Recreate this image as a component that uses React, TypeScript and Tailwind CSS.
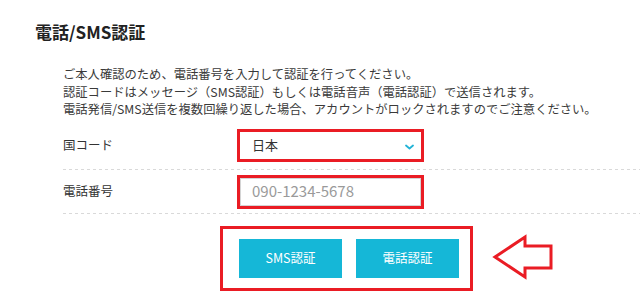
import React from 'react';

const dotted =
  'h-px w-full bg-[repeating-linear-gradient(to_right,#d9d9d9_0px,#d9d9d9_3px,transparent_3px,transparent_6px)]';

function Row({ label, children, pt, pb }: { label: string; children: React.ReactNode; pt: string; pb: string }) {
  return (
    <div>
      <div className={`flex items-center ${pt} ${pb}`}>
        <div className="w-[174px] shrink-0 text-[12.5px] text-[#333]">{label}</div>
        {children}
      </div>
      <div className={dotted} />
    </div>
  );
}

export default function App() {
  return (
    <div
      className="w-[640px] h-[304px] overflow-hidden bg-white pt-[22px] text-[#333]"
      style={{ fontFamily: '"Noto Sans CJK JP", "Noto Sans", sans-serif' }}
    >
      <h2 className="ml-[35px] text-[17px] leading-[20px] font-bold text-[#222]">電話/SMS認証</h2>

      <div className="ml-[63px] mt-[24px] text-[12.3px] leading-[17.5px] text-[#3a3a3a]">
        <p>ご本人確認のため、電話番号を入力して認証を行ってください。</p>
        <p>認証コードはメッセージ（SMS認証）もしくは電話音声（電話認証）で送信されます。</p>
        <p>電話発信/SMS送信を複数回繰り返した場合、アカウントがロックされますのでご注意ください。</p>
      </div>

      <div className="ml-[63px] mt-[4px]">
        <Row label="国コード" pt="pt-[6px]" pb="pb-[7px]">
          <div className="flex h-[33px] w-[187px] items-center justify-between border-[3px] border-[#ea1c24] bg-white pl-[12px] pr-[7px]">
            <span className="text-[13px] text-[#333]">日本</span>
            <svg width="9" height="6" viewBox="0 0 9 6" fill="none" className="mt-[3px]">
              <path d="M1 1.5l3.5 3L8 1.5" stroke="#22b3d6" strokeWidth="1.8" strokeLinecap="round" strokeLinejoin="round" />
            </svg>
          </div>
        </Row>
        <Row label="電話番号" pt="pt-[5px]" pb="pb-[4px]">
          <div className="h-[34px] w-[187px] border-[3px] border-[#ea1c24] bg-white">
            <div className="flex h-full items-center border border-[#d4d4d4] pl-[11px] text-[15px] text-[#9a9a9a]">
              090-1234-5678
            </div>
          </div>
        </Row>
      </div>

      <div className="ml-[220px] mt-[12px] flex items-center gap-[19px]">
        <div className="flex h-[65px] w-[253px] items-center gap-[14px] border-[3px] border-[#ea1c24] pl-[16px]">
          <button className="h-[39px] w-[103px] bg-[#15b7d7] text-[12.5px] text-white">SMS認証</button>
          <button className="h-[39px] w-[103px] bg-[#15b7d7] text-[12.5px] text-white">電話認証</button>
        </div>
        <svg width="62" height="48" viewBox="0 0 62 48" fill="none" className="-mt-[2px]">
          <path
            d="M3 24L33 4V13H59V35H33V44Z"
            stroke="#ea1c24"
            strokeWidth="3"
            strokeLinejoin="miter"
            fill="white"
          />
        </svg>
      </div>
    </div>
  );
}
